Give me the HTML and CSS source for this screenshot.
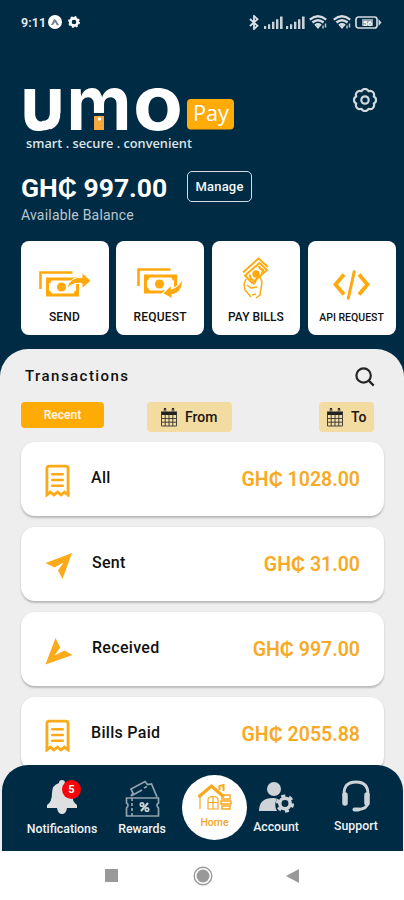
FILE: index.html
```
<!DOCTYPE html>
<html lang="en">
<head>
<meta charset="utf-8">
<title>UMO Pay</title>
<link rel="stylesheet" href="styles.css">
</head>
<body>
<svg class="defs" width="0" height="0">
  <defs>
    <symbol id="receipt" viewBox="0 0 26 34">
      <path d="M2 32V4.500q0-2.500 2.500-2.500h17q2.500 0 2.500 2.500V32l-3.700-3-3.600 3-3.700-3-3.700 3-3.600-3z" fill="none" stroke="currentColor" stroke-width="3"/>
      <path d="M7.500 10.500h11M7.500 16.500h11M7.500 22.500h11" stroke="currentColor" stroke-width="2.600" stroke-linecap="round"/>
    </symbol>
    <symbol id="calendar" viewBox="0 0 18 19">
      <path d="M1 7V3.500h16V7z" fill="#222"/>
      <path d="M1.500 4v14h15V4M1.500 10.500h15M1.500 14.200h15M5.200 7v11M9 7v11M12.800 7v11" fill="none" stroke="#333" stroke-width=".9"/>
      <path d="M5 1v4M13 1v4" stroke="#222" stroke-width="2.400" stroke-linecap="round"/>
      <path d="M5 1.500v2.500M13 1.500v2.500" stroke="#f3dca2" stroke-width=".8"/>
    </symbol>
    <symbol id="signal" viewBox="0 0 19 13">
      <path d="M0 10h2.200v3H0zM4 8.300h2.200V13H4zM8 5.800h2.400V13H8zM12 3.300h2.400V13H12zM16 .5h2.600V13H16z" fill="#c9d2d8"/>
    </symbol>
    <symbol id="wifi" viewBox="0 0 18 14">
      <path d="M.8 4.600Q9-2.200 17.200 4.600M3.400 7.500q5.600-4.600 11.200 0M6 10.300q3-2.400 6 0" fill="none" stroke="#d6dde1" stroke-width="2.300"/>
      <path d="M9 14l-2.600-3.200q2.600-1.500 5.200 0z" fill="#d6dde1"/>
      <path d="M14 10.500v3M16.500 8.500v4" stroke="#aebbc4" stroke-width="1.600"/>
    </symbol>
    <symbol id="note" viewBox="0 0 40 26">
      <path d="M1.500 18V1.500h32" fill="none" stroke="currentColor" stroke-width="2.600"/>
      <path d="M7 6.500h33v19H7zM12.500 9.500q-.5 2.500-2.500 3v7q2 .5 2.500 3h22q.5-2.500 2.500-3v-7q-2-.5-2.500-3z" fill="currentColor" fill-rule="evenodd"/>
      <circle cx="22.500" cy="16" r="4.500" fill="currentColor"/>
    </symbol>
  </defs>
</svg>
<div class="phone">
  <header class="status">
    <span class="time">9:11</span>
    <svg class="app" width="14" height="14" viewBox="0 0 14 14"><circle cx="7" cy="7" r="7" fill="#fff"/><path d="M3 10l3-6 2 1 3 5-2 .5L7 7l-2 3z" fill="#74838e"/></svg>
    <svg class="gear" width="12" height="12" viewBox="0 0 12 12"><circle cx="6" cy="6" r="3.700" fill="none" stroke="#fff" stroke-width="2.700"/><circle cx="6" cy="6" r="5.200" fill="none" stroke="#fff" stroke-width="1.500" stroke-dasharray="2 2.080"/></svg>
    <svg class="bt" width="10" height="15" viewBox="0 0 10 15"><path d="M1 4l7.500 6.800L5 14V1l3.500 3.200L1 11" fill="none" stroke="#d9e0e4" stroke-width="1.800"/></svg>
    <svg class="sig" width="19" height="13"><use href="#signal"/></svg>
    <svg class="sig" width="19" height="13"><use href="#signal"/></svg>
    <svg class="wifi" width="18" height="14"><use href="#wifi"/></svg>
    <svg class="wifi last" width="18" height="14"><use href="#wifi"/></svg>
    <svg width="27" height="13" viewBox="0 0 27 13"><rect x="1" y="1" width="21" height="11" rx="2.500" fill="none" stroke="#d3dbe0" stroke-width="1.700"/><rect x="7" y="3" width="11" height="7" fill="#8fa0ac"/><path d="M23.500 3l3 3.500-3 3.500z" fill="#d3dbe0"/><text x="8" y="9.500" class="batt">56</text></svg>
  </header>

  <section class="brand">
    <svg class="logo" width="220" height="74" viewBox="0 0 220 74">
      <text class="word" x="0" y="50" textLength="45" lengthAdjust="spacingAndGlyphs">u</text>
      <text class="word" x="46.500" y="50" textLength="65" lengthAdjust="spacingAndGlyphs">m</text>
      <text class="word" x="113" y="50" textLength="50" lengthAdjust="spacingAndGlyphs">o</text>
      <path d="M22 50.500Q38 50 39.500 34H31Q30 41 22 41z" fill="#fff"/>
      <path d="M42 33H40.500Q40 50 23 51v2h19z" fill="#002b45"/>
      <rect x="72" y="33" width="14" height="19" fill="#002b45"/>
      <rect x="74" y="36" width="10" height="14" fill="#f6a93f"/>
      <circle cx="79.500" cy="39" r="1.700" fill="#fff"/>
      <rect x="167" y="19" width="47" height="30.500" rx="4" fill="#ffab09"/>
      <text class="pay" x="173" y="41" textLength="36" lengthAdjust="spacingAndGlyphs">Pay</text>
      <text class="tag" x="6" y="68" textLength="166" lengthAdjust="spacingAndGlyphs">smart . secure . convenient</text>
    </svg>
    <svg class="settings" width="24" height="24" viewBox="0 0 24 24" fill="none" stroke="#d3dade" stroke-width="2.200"><path d="M8.400 3.200a4 4 0 0 1 7.200 0 4 4 0 0 1 5.200 5.200 4 4 0 0 1 0 7.200 4 4 0 0 1-5.200 5.200 4 4 0 0 1-7.200 0 4 4 0 0 1-5.200-5.200 4 4 0 0 1 0-7.200 4 4 0 0 1 5.200-5.200z" stroke-linejoin="round"/><circle cx="12" cy="12" r="3.700"/></svg>
  </section>

  <section class="balance">
    <div class="amount-row"><span class="amount">GH₵ 997.00</span><button class="manage">Manage</button></div>
    <div class="caption">Available Balance</div>
  </section>

  <nav class="tiles">
    <a class="tile">
      <svg class="t-icon" width="52" height="34" viewBox="0 0 52 34"><svg x="0" y="4" width="40" height="26"><use href="#note"/></svg><path d="M27.500 22Q31 9 43 10.500V5.500L52 14l-9 7.500v-5Q34 15 27.500 22z" fill="currentColor" stroke="#fff" stroke-width="1"/></svg>
      <span class="t-send">SEND</span>
    </a>
    <a class="tile">
      <svg class="t-icon" width="46" height="34" viewBox="0 0 46 34"><svg x="0" y="1" width="40" height="26"><use href="#note"/></svg><path d="M45.500 11Q46 27 35 27.500l.5 4.500-10-5.500 8.500-8.500.5 4Q42 20 45.500 11z" fill="currentColor" stroke="#fff" stroke-width="1.200"/></svg>
      <span class="t-request">REQUEST</span>
    </a>
    <a class="tile">
      <svg class="t-icon hand" width="28" height="42" viewBox="0 0 28 42" fill="none" stroke="currentColor" stroke-width="1.500"><path d="M1 15.500L16.500 1.500 26 10" stroke-width="1.800"/><path d="M3 18.500L17.500 6l7.500 7L10 26z" stroke-width="1.900"/><path d="M7 18q2 1 1.500 4l3 1M17 9q.500 3 4 4l-1 4" stroke-width="2.200"/><circle cx="14" cy="17" r="2.900" fill="currentColor"/><path d="M4 22l-2 5 1 6 6 7M17 16l-3 7q0 3-3 4M18 20l2 5-2 13-4 3M5 28l4 3 6-1M10 38l4-1"/></svg>
      <span class="t-bills">PAY BILLS</span>
    </a>
    <a class="tile">
      <svg class="t-icon code" width="37" height="32" viewBox="0 0 37 32" fill="none" stroke="currentColor" stroke-width="3.800"><path d="M11 5.500L2.500 15.500 11 25.500M26 5.500l8.500 10L26 25.500"/><path d="M21.500 1.500L15 30.500" stroke-width="3"/></svg>
      <span class="t-api">API REQUEST</span>
    </a>
  </nav>

  <main class="sheet">
    <div class="sheet-head">
      <h2>Transactions</h2>
      <svg width="20" height="20" viewBox="0 0 20 20" fill="none" stroke="#252525" stroke-width="2.200"><circle cx="8.600" cy="8.500" r="7.200"/><path d="M13.700 13.600l5 5"/></svg>
    </div>
    <div class="filters">
      <button class="recent">Recent</button>
      <button class="date from"><svg width="18" height="19"><use href="#calendar"/></svg><span>From</span></button>
      <button class="date to"><svg width="18" height="19"><use href="#calendar"/></svg><span>To</span></button>
    </div>
    <div class="cards">
      <article class="card"><svg class="c-icon" width="25" height="33"><use href="#receipt"/></svg><span class="label">All</span><span class="value">GH₵ 1028.00</span></article>
      <article class="card plane"><svg class="c-icon" width="28" height="28" viewBox="0 0 28 28"><path d="M27 1L17.500 27 13 18.500l5.500-8L9.500 15.500.500 11z" fill="currentColor"/></svg><span class="label">Sent</span><span class="value">GH₵ 31.00</span></article>
      <article class="card plane"><svg class="c-icon down" width="28" height="28" viewBox="0 0 28 28"><path d="M.5 27.500L10.500 1l4.700 9.500-5.700 8 10-5L27.500 18z" fill="currentColor"/></svg><span class="label">Received</span><span class="value">GH₵ 997.00</span></article>
      <article class="card"><svg class="c-icon" width="25" height="33"><use href="#receipt"/></svg><span class="label">Bills Paid</span><span class="value">GH₵ 2055.88</span></article>
    </div>
  </main>

  <footer class="tabs">
    <a class="tab notif"><span class="bell"><svg width="32" height="34" viewBox="0 0 32 34"><path d="M16 0q3 0 3 3 7 2 7 10 0 9 5 12v3H1v-3q5-3 5-12 0-8 7-10 0-3 3-3zM11 28h10q-1 6-5 6t-5-6z" fill="#dedfe0"/></svg><b>5</b></span><span class="tab-text">Notifications</span></a>
    <a class="tab rewards"><svg width="35" height="38" viewBox="0 0 35 38" fill="none" stroke="#91a3af" stroke-width="1.700"><path d="M6 16l2-3-2-4L20 1.500l2.500 3 4-.5L32 17M6 16l11-6M19 8l3-1.500"/><path d="M1.500 18h32v5q-3 2 0 5v8h-32v-8q3-3 0-5z"/><path d="M7 18v3m0 2v3m0 2v3m0 2v3"/><path d="M16 31l7-8" stroke="#c7d0d6" stroke-width="2"/><circle cx="17" cy="24.500" r="1.700" stroke="#c7d0d6"/><circle cx="22" cy="29.500" r="1.700" stroke="#c7d0d6"/></svg><span class="tab-text">Rewards</span></a>
    <a class="tab home"><svg width="36" height="28" viewBox="0 0 36 28" fill="none" stroke="#f9a71c"><path d="M1.500 14L14.500 3 27 14" stroke-width="3.200"/><path d="M22.500 7V3l4-1v6" stroke-width="2"/><path d="M3 14v12M11 26V17q0-3.500 5-3.500t5 3.500v9zM16 13.500V26M11 19.500h10" stroke-width="1.200"/><path d="M25 12h8v4h-8zM24 18h10v3H24zM25 23h8v3h-8z" stroke-width="1.400"/></svg><span class="tab-text">Home</span></a>
    <a class="tab account"><svg width="35" height="31" viewBox="0 0 35 31"><circle cx="15" cy="7" r="7" fill="#cdd3d7"/><path d="M0 29q0-13 14-13 2.500 0 4 .7-3.500 6 0 12.300z" fill="#cdd3d7"/><circle cx="26" cy="21.500" r="5.200" fill="none" stroke="#cdd3d7" stroke-width="3.500"/><circle cx="26" cy="21.500" r="7.600" fill="none" stroke="#cdd3d7" stroke-width="3" stroke-dasharray="4 3.959"/></svg><span class="tab-text">Account</span></a>
    <a class="tab support"><svg width="30" height="32" viewBox="0 0 30 32" fill="none" stroke="#cdd3d7"><path d="M3 16v-2Q3 2 15 2t12 12v2M27 23q-1 6-10 6.500" stroke-width="2.800"/><path d="M4 15v8M26 15v8" stroke-width="5.500" stroke-linecap="round"/><path d="M13.500 29.500h4" stroke-width="4" stroke-linecap="round"/></svg><span class="tab-text">Support</span></a>
  </footer>
  <div class="system">
    <svg width="13" height="13"><rect width="13" height="13" fill="#999"/></svg>
    <svg class="s-home" width="20" height="20" viewBox="0 0 20 20"><circle cx="10" cy="10" r="8.800" fill="none" stroke="#999" stroke-width="1.400"/><circle cx="10" cy="10" r="6.500" fill="#999"/></svg>
    <svg class="s-back" width="13" height="14" viewBox="0 0 13 14"><path d="M0 7L13 0v14z" fill="#999"/></svg>
  </div>
</div>
</body>
</html>
```
FILE: styles.css
```
* { box-sizing: border-box; }
body { margin: 0; font-family: Roboto, sans-serif; }
button { border: 0; padding: 0; font-family: inherit; }
svg { display: block; flex: none; }
.defs { position: absolute; }
.phone { width: 404px; height: 900px; background: #002b45; overflow: hidden; display: flex; flex-direction: column; }

.status { height: 44px; flex: none; display: flex; align-items: center; padding: 0 22px 0 21px; color: #e9eef1; }
.time { font-size: 12.500px; font-weight: 600; width: 27px; white-space: nowrap; letter-spacing: .1px; }
.gear { margin-left: 6px; }
.bt { margin-left: auto; margin-right: 5px; }
.sig { margin-right: 3px; }
.wifi { margin-right: 6px; margin-left: 1px; }
.wifi.last { margin-left: 0; margin-right: 4px; }
.batt { font-size: 8px; font-weight: 700; fill: #fff; }

.brand { height: 129px; flex: none; display: flex; justify-content: space-between; align-items: flex-start; padding: 36px 27px 0 20px; }
.logo { overflow: visible; }
.word { font-family: Inter, sans-serif; font-size: 76px; font-weight: 700; fill: #fff; }
.pay { font-family: "Open Sans", sans-serif; font-size: 22px; fill: #fff; }
.tag { font-family: "Open Sans", sans-serif; font-size: 12px; font-weight: 600; fill: #dce3e7; }
.settings { margin-top: 8px; }

.balance { height: 68px; flex: none; padding-left: 21px; }
.amount-row { display: flex; height: 32px; }
.amount { width: 166px; font-size: 26.500px; line-height: 30px; font-weight: 700; color: #fff; white-space: nowrap; }
.manage { width: 65px; height: 31px; margin-top: -2px; border: 1px solid #d5dce1; border-radius: 5px; background: transparent; color: #f5f7f8; font-size: 13px; font-weight: 500; letter-spacing: .2px; }
.caption { margin-top: 2px; font-size: 14px; line-height: 17px; color: #bcc6cd; letter-spacing: .2px; }

.tiles { height: 108px; flex: none; display: flex; gap: 7.700px; padding-left: 20.500px; }
.tile { width: 88px; height: 94px; flex: none; background: #fff; border-radius: 8px; display: flex; flex-direction: column; align-items: center; justify-content: flex-end; padding-bottom: 11px; color: #ffa90c; }
.tile span { color: #111; font-size: 12px; line-height: 14px; font-weight: 500; white-space: nowrap; }
.tile .t-send, .tile .t-request { letter-spacing: .2px; }
.t-icon { margin-bottom: 9px; }
.t-icon.hand { margin-bottom: 11px; }
.t-icon.code { margin-bottom: 10px; }
.tile .t-api { font-size: 10.500px; margin-bottom: -1px; }

.sheet { height: 416px; flex: none; background: #eee; border-radius: 28px 28px 0 0; padding: 0 20px 0 21px; overflow: hidden; }
.sheet-head { height: 53px; display: flex; justify-content: space-between; align-items: flex-start; padding: 18px 9px 0 4px; }
.sheet-head h2 { margin: 0; font-size: 15px; line-height: 19px; font-weight: 500; letter-spacing: 1.450px; color: #111; }
.filters { display: flex; height: 40px; align-items: flex-start; }
.recent { width: 83px; height: 26px; border-radius: 4px; background: #ffab05; color: #fff7e6; font-size: 12px; font-weight: 600; }
.date { height: 30px; border-radius: 4px; background: #f3dca2; display: flex; align-items: center; color: #1b1710; font-size: 14px; font-weight: 500; }
.from { width: 85px; margin-left: 43px; padding-left: 13px; gap: 7px; }
.to { width: 55px; margin-left: 87px; padding-left: 7px; gap: 7px; }
.cards { display: flex; flex-direction: column; gap: 11px; }
.card { height: 74px; flex: none; display: flex; align-items: center; padding: 0 24px; border-radius: 14px; background: #fff; box-shadow: 0 1.500px 2px #b9b9b9; }
.c-icon { color: #fbab1a; margin: 3px 21px 0 0; }
.label { font-size: 16px; font-weight: 500; color: #111; margin-top: -3px; letter-spacing: .3px; }
.plane .c-icon { margin-right: 19px; }
.value { margin-left: auto; font-size: 19.500px; font-weight: 600; color: #f8aa25; padding-top: 1px; }

.tabs { height: 86px; flex: none; background: #eee; position: relative; display: flex; align-items: flex-start; z-index: 0; }
.tabs::before { content: ""; position: absolute; inset: 0 1px 0 2px; background: #002b45; border-radius: 26px 26px 0 0; z-index: -1; }
.tab { display: flex; flex-direction: column; align-items: center; flex: none; color: #f1f3f4; }
.tab-text { font-size: 12.300px; line-height: 15px; font-weight: 500; white-space: nowrap; }
.notif { width: 80px; margin-left: 22px; padding-top: 15px; }
.notif .tab-text { margin-top: 8px; }
.bell { position: relative; }
.bell b { position: absolute; left: 16px; top: 0; width: 19px; height: 19px; border-radius: 50%; background: #f6060b; color: #fff; font-size: 11px; line-height: 19px; text-align: center; }
.rewards { width: 80px; padding-top: 15px; }
.rewards .tab-text { margin-top: 4px; }
.home { width: 65px; height: 65px; border-radius: 50%; background: #fff; margin: 10px 0 0 0; padding-top: 8px; color: #f5a52b; }
.home .tab-text { font-size: 10.500px; line-height: 13px; margin-top: 5px; }
.account { width: 58px; padding-top: 17px; }
.account .tab-text { margin-top: 7px; }
.support { width: 60px; margin-left: 21px; padding-top: 15px; }
.support .tab-text { margin-top: 7px; }

.system { height: 49px; flex: none; background: #fff; display: flex; align-items: center; padding-left: 105px; }
.s-home { margin-left: 75px; }
.s-back { margin-left: 73px; }
```
